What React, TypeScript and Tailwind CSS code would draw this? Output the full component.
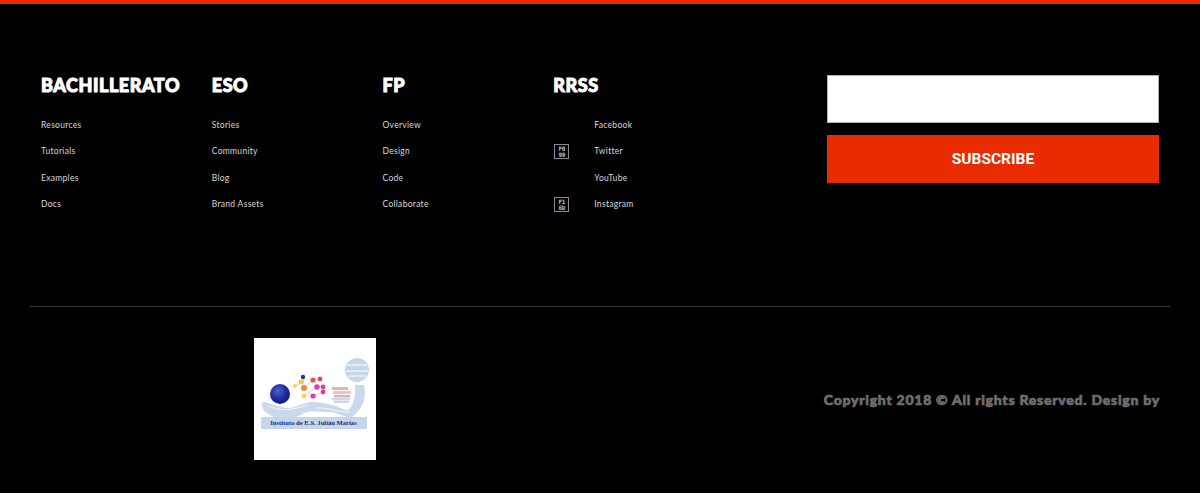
import React from 'react';

const columns = [
  { title: 'BACHILLERATO', links: ['Resources', 'Tutorials', 'Examples', 'Docs'] },
  { title: 'ESO', links: ['Stories', 'Community', 'Blog', 'Brand Assets'] },
  { title: 'FP', links: ['Overview', 'Design', 'Code', 'Collaborate'] },
];

const social = [
  { name: 'Facebook', code: null },
  { name: 'Twitter', code: ['F0', '99'] },
  { name: 'YouTube', code: null },
  { name: 'Instagram', code: ['F1', '6D'] },
];

const heading =
  "font-['Lato',sans-serif] font-black text-[18px] leading-[20px] tracking-[0.55px] text-white [-webkit-text-stroke:1px_white]";
const link = "font-['Lato',sans-serif] text-[8.5px] leading-[12px] tracking-[0.3px] text-[#d8d8d8]";

const Logo = () => (
  <svg viewBox="0 0 122 122" className="block w-full h-full">
    <defs>
      <radialGradient id="ball" cx="0.4" cy="0.35" r="0.7">
        <stop offset="0" stopColor="#4f63c8" />
        <stop offset="0.6" stopColor="#1c2a9c" />
        <stop offset="1" stopColor="#121a6e" />
      </radialGradient>
    </defs>
    <rect width="122" height="122" fill="#fff" />
    <path
      d="M8 64c9 0 17 6 26 6s15-6 24-6 14 2 20 3 13 6 16 5c5-3 8-14 7-25h9c2 8 0 18-1 18-3 7-7 11-11 14-7 1-16-5-24-5s-14-1-20 0-12 7-23 7c-7 0-12-2-17-5-4-2-7-7-6-12z"
      fill="#cbd9ea"
    />
    <path d="M14 68c14 6 24 4 40-1M62 70c12-1 24 5 34 4" stroke="#fff" strokeWidth="1" fill="none" opacity="0.7" />
    <ellipse cx="103" cy="32" rx="12" ry="12" fill="#c7d7ea" />
    <path d="M93 27h20M92 33h22M94 38h18" stroke="#fff" strokeWidth="1" fill="none" />
    <circle cx="26" cy="56" r="10" fill="url(#ball)" />
    <path
      d="M49 39l1 11 9 8 10-4M41 48l9-4M50 50l9-8 7-1M59 42l4 7 6 0 0 5M50 58l13-9"
      stroke="#d8c8d8"
      strokeWidth="0.8"
      fill="none"
    />
    <circle cx="49" cy="39" r="2.2" fill="#2d2f8f" />
    <circle cx="47" cy="44" r="2.4" fill="#f1c93c" />
    <circle cx="41" cy="48" r="2" fill="#f1d64c" />
    <circle cx="50" cy="50" r="3" fill="#ef8a2a" />
    <circle cx="59" cy="42" r="2.6" fill="#ee4f4f" />
    <circle cx="66" cy="41" r="2.4" fill="#e8495f" />
    <circle cx="63" cy="49" r="2.8" fill="#e43fa6" />
    <circle cx="69" cy="49" r="2.4" fill="#e43fa6" />
    <circle cx="69" cy="54" r="2.4" fill="#d93c9c" />
    <circle cx="59" cy="58" r="2.6" fill="#dc3fa5" />
    <circle cx="50" cy="58" r="2.4" fill="#f1d64c" />
    <rect x="78" y="49" width="16" height="3" fill="#eab0a8" />
    <rect x="79" y="53" width="18" height="3" fill="#efc4bc" />
    <rect x="80" y="57" width="16" height="2.5" fill="#e9aeb0" />
    <rect x="78" y="60" width="18" height="2.5" fill="#b9e0ec" />
    <rect x="80" y="63" width="15" height="2" fill="#d3cdf0" />
    <rect x="7" y="79" width="106" height="12" fill="#c5d6ec" />
    <text
      x="59.5"
      y="87.3"
      textAnchor="middle"
      fill="#1d2a6e"
      fontSize="6.6"
      fontWeight="700"
      fontFamily="'Liberation Serif', serif"
    >
      Instituto de E.S. Julián Marías
    </text>
  </svg>
);

const Tofu = ({ code }: { code: string[] }) => (
  <span className="flex h-[15px] w-[15px] flex-col items-center justify-center border border-[#8c8c8c] font-['DejaVu_Sans_Mono',monospace] text-[6px] font-bold leading-[6px] tracking-[-0.3px] text-[#c4c4c4]">
    <span>{code[0]}</span>
    <span>{code[1]}</span>
  </span>
);

export default function App() {
  return (
    <footer className="h-[493px] overflow-hidden border-t-4 border-[#e92b00] bg-black px-[30px]">
      <div className="flex h-[303px] items-start justify-between border-b border-[#3c3c3c] pl-[11px] pr-[11px] pt-[71px]">
        <div className="grid w-[683px] grid-cols-4">
          {columns.map((col) => (
            <div key={col.title}>
              <h4 className={heading}>{col.title}</h4>
              <ul className="mt-[24px] flex flex-col gap-[14.4px]">
                {col.links.map((item) => (
                  <li key={item} className={link}>
                    {item}
                  </li>
                ))}
              </ul>
            </div>
          ))}
          <div>
            <h4 className={heading}>RRSS</h4>
            <ul className="mt-[24px] flex flex-col gap-[14.4px]">
              {social.map((s) => (
                <li key={s.name} className={`relative pl-[41px] ${link}`}>
                  {s.code && (
                    <span className="absolute left-px top-[-1px]">
                      <Tofu code={s.code} />
                    </span>
                  )}
                  {s.name}
                </li>
              ))}
            </ul>
          </div>
        </div>
        <form className="flex w-[332px] flex-col gap-3">
          <input className="h-12 w-full border border-[#b0b0b0] bg-white" aria-label="email" />
          <button
            type="button"
            className="h-12 w-full bg-[#e92b00] pt-px font-['Roboto',sans-serif] text-[15.5px] font-bold text-white"
          >
            SUBSCRIBE
          </button>
        </form>
      </div>
      <div className="flex items-center justify-between pl-[224px] pr-[10px] pt-[31px]">
        <div className="h-[122px] w-[122px]">
          <Logo />
        </div>
        <p className="font-['Lato',sans-serif] text-[14px] font-black tracking-[0.75px] text-[#6e6e6e] [-webkit-text-stroke:0.7px_#6e6e6e]">
          Copyright 2018 © All rights Reserved. Design by
        </p>
      </div>
    </footer>
  );
}
